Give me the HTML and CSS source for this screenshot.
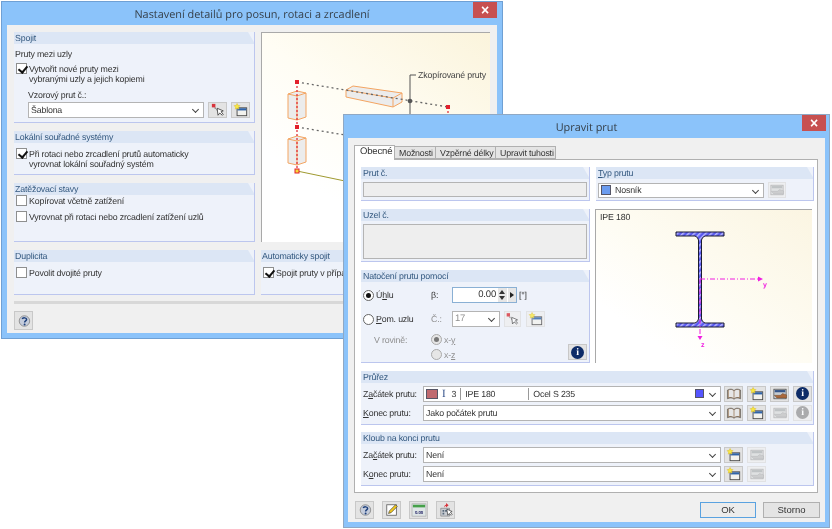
FILE: index.html
```html
<!DOCTYPE html>
<html lang="cs">
<head>
<meta charset="utf-8">
<title>Upravit prut</title>
<link rel="stylesheet" href="styles.css">
</head>
<body>
<svg class="defs" width="0" height="0">
  <defs>
    <pattern id="hatch" width="4" height="4" patternUnits="userSpaceOnUse" patternTransform="rotate(45)"><rect width="4" height="4" fill="#5a5af0"/><rect width="1.500" height="4" fill="#b8b8ff"/></pattern>
  </defs>
  <symbol id="i-new" viewBox="0 0 18 16"><rect x="4.500" y="5.500" width="11" height="9" fill="#f2f2ee" stroke="#444"/><rect x="5" y="6" width="10" height="2.500" fill="#2f63a8"/><path d="M4.500 .5l1 2.200 2.400.3-1.700 1.700.4 2.300-2.100-1.100-2.100 1.100.4-2.300-1.700-1.700 2.400-.3z" fill="#f9e840" stroke="#d8b820" stroke-width=".5"/></symbol>
  <symbol id="i-pick" viewBox="0 0 18 16"><path d="M3 3l9 9" stroke="#888" stroke-width="1.500" stroke-dasharray="2 1"/><rect x="2" y="1" width="4" height="4" fill="#d8343c"/><path d="M8 6l1 8 2-2.500 3 2.500 1-1-2.500-3 2.500-1z" fill="#fff" stroke="#333" stroke-width=".9"/></symbol>
  <symbol id="i-book" viewBox="0 0 18 16"><path d="M1.500 3.500c3-1.500 5.500-1.500 7.500.5 2-2 4.500-2 7.500-.5v10c-3-1.500-5.500-1.500-7.500.5-2-2-4.500-2-7.500-.5z" fill="#a08468" stroke="#555" stroke-width=".7"/><path d="M3 3.800c2.500-.8 4.500-.6 5.500 1v8c-1.200-1.300-3-1.600-5.500-1zM9.500 4.800c1-1.600 3-1.800 5.500-1v8c-2.500-.6-4.300-.3-5.500 1z" fill="#e6e6e6"/></symbol>
  <symbol id="i-imp" viewBox="0 0 18 16"><rect x="2" y="2.500" width="14" height="11" fill="#c6ccd2" stroke="#444" stroke-width=".8"/><rect x="3" y="3.500" width="12" height="2.500" fill="#34568a"/><path d="M2.500 9.500h7l2.500-2 4.500 1.500v3.500h-11z" fill="#a9683c" stroke="#6a4a30" stroke-width=".5"/></symbol>
  <symbol id="i-imp-off" viewBox="0 0 18 16"><rect x="2" y="2.500" width="14" height="11" fill="#dcdedd" stroke="#a4a4a4" stroke-width=".8"/><rect x="3" y="3.500" width="12" height="2.500" fill="#b4b8b8"/><path d="M2.500 9.500h7l2.500-2 4.500 1.500v3.500h-11z" fill="#c4c4c4" stroke="#a8a8a8" stroke-width=".5"/></symbol>
  <symbol id="i-help" viewBox="0 0 18 16"><circle cx="9.500" cy="8" r="6" fill="#c4ccdc" stroke="#8a8a8a"/><path d="M7 5.800c.6-2 5-1.800 5 .5 0 1.600-2.300 1.700-2.300 3.400" fill="none" stroke="#1d3f7a" stroke-width="1.700"/><circle cx="9.700" cy="12" r="1.100" fill="#1d3f7a"/></symbol>
</svg>

<section class="window w1">
  <header class="titlebar">
    <h1 class="title">Nastavení detailů pro posun, rotaci a zrcadlení</h1>
    <button class="close">×</button>
  </header>
  <div class="client client-1">
    <div class="w1-grid">
      <div class="stack">
        <div class="group g-spojit">
          <h2 class="ghead">Spojit</h2>
          <div class="gbody">
            <p class="first-line">Pruty mezi uzly</p>
            <label class="check"><span class="box on"></span><span>Vytvořit nové pruty mezi<br>vybranými uzly a jejich kopiemi</span></label>
            <p class="indent vz">Vzorový prut č.:</p>
            <div class="row indent r-vz">
              <div class="combo wide"><span>Šablona</span><i class="chev"></i></div>
              <span class="ibtn"><svg><use href="#i-pick"/></svg></span>
              <span class="ibtn"><svg><use href="#i-new"/></svg></span>
            </div>
          </div>
        </div>
        <div class="group g-lok">
          <h2 class="ghead">Lokální souřadné systémy</h2>
          <div class="gbody">
            <label class="check"><span class="box on"></span><span>Při rotaci nebo zrcadlení prutů automaticky<br>vyrovnat lokální souřadný systém</span></label>
          </div>
        </div>
        <div class="group g-zat">
          <h2 class="ghead">Zatěžovací stavy</h2>
          <div class="gbody col-16">
            <label class="check"><span class="box"></span><span>Kopírovat včetně zatížení</span></label>
            <label class="check"><span class="box"></span><span>Vyrovnat při rotaci nebo zrcadlení zatížení uzlů</span></label>
          </div>
        </div>
      </div>
      <div class="preview p-copy">
        <svg class="copy-svg" width="229" height="210" viewBox="261 32 229 210">
          <path d="M297 171L345 181" stroke="#a09a30" stroke-width="1"/>
          <path d="M416 75H410V120" stroke="#555" fill="none"/>
          <g fill="#ececec" stroke="#f4a562">
            <path d="M288 94l9 -3 9 2v24l-9 3-9 -2z"/><path d="M288 94l9 2 9-3M297 96v24" fill="none"/>
            <path d="M288 139l9 -3 9 2v24l-9 3-9 -2z"/><path d="M288 139l9 2 9-3M297 141v24" fill="none"/>
            <path d="M346 90l7-4 49 7v9l-9 5-47-10z"/><path d="M346 90l47 8 9-5M393 98v9" fill="none"/>
          </g>
          <path d="M297 82L448 107M297 127L345 135" stroke="#666" stroke-width="1.300" stroke-dasharray="2 3" fill="none"/>
          <path d="M297 82V171M448 107V125" stroke="#e2202c" stroke-width="1.200" stroke-dasharray="2 2" fill="none"/>
          <circle cx="410" cy="101" r="2.300" fill="#555"/>
          <rect x="295" y="80" width="4" height="4" fill="#e2202c"/><rect x="295" y="125" width="4" height="4" fill="#e2202c"/><rect x="446" y="105" width="4" height="4" fill="#e2202c"/>
          <rect x="295" y="169" width="4" height="4" fill="#f7d93a" stroke="#e2202c"/>
          <text x="418" y="78" class="svg-label">Zkopírované pruty</text>
        </svg>
      </div>
      <div class="group">
        <h2 class="ghead">Duplicita</h2>
        <div class="gbody"><label class="check"><span class="box"></span><span>Povolit dvojité pruty</span></label></div>
      </div>
      <div class="group">
        <h2 class="ghead">Automaticky spojit</h2>
        <div class="gbody"><label class="check"><span class="box on"></span><span class="nowrap">Spojit pruty v případ</span></label></div>
      </div>
    </div>
    <hr class="sep">
    <footer class="foot"><span class="ibtn big"><svg><use href="#i-help"/></svg></span></footer>
  </div>
</section>

<section class="window w2">
  <header class="titlebar">
    <h1 class="title">Upravit prut</h1>
    <button class="close">×</button>
  </header>
  <div class="client client-2">
    <nav class="tabs">
      <span class="tab active">Obecné</span><span class="tab">Možnosti</span><span class="tab">Vzpěrné délky</span><span class="tab">Upravit tuhosti</span>
    </nav>
    <div class="page">
      <div class="w2-grid">
        <div class="stack">
          <div class="group g-34">
            <h2 class="ghead">Prut č.</h2>
            <div class="gbody tight"><div class="field f-15"></div></div>
          </div>
          <div class="group g-53">
            <h2 class="ghead">Uzel č.</h2>
            <div class="gbody tight"><div class="field f-35"></div></div>
          </div>
          <div class="group g-93">
            <h2 class="ghead">Natočení prutu pomocí</h2>
            <div class="gbody rot">
              <div class="rot-row r1">
                <span class="radio on"></span><span class="rl">Ú<u>h</u>lu</span>
                <span class="rk">β:</span>
                <div class="spin"><span>0.00</span><i class="updown"></i><i class="step"></i></div>
                <span class="unit">[°]</span>
              </div>
              <div class="rot-row r2">
                <span class="radio"></span><span class="rl"><u>P</u>om. uzlu</span>
                <span class="rk off">Č.:</span>
                <div class="combo num off"><span>17</span><i class="chev"></i></div>
                <span class="ibtn off"><svg><use href="#i-pick"/></svg></span>
                <span class="ibtn off"><svg><use href="#i-new"/></svg></span>
              </div>
              <div class="rot-bottom">
                <div class="plane">
                  <div class="rot-row r3"><span class="pl off">V rovině:</span><span class="radio dis on"></span><span class="off pv">x-<u>y</u></span></div>
                  <div class="rot-row r4"><span class="pl"></span><span class="radio dis"></span><span class="off pv">x-<u>z</u></span></div>
                </div>
                <span class="ibtn info-b"><span class="info">i</span></span>
              </div>
            </div>
          </div>
        </div>
        <div class="stack">
          <div class="group g-34">
            <h2 class="ghead"><u>T</u>yp prutu</h2>
            <div class="gbody tight row r-typ">
              <div class="combo typ"><span class="sw sw-nos"></span><span>Nosník</span><i class="chev"></i></div>
              <span class="ibtn off"><svg><use href="#i-imp-off"/></svg></span>
            </div>
          </div>
          <div class="preview p-ipe">
            <span class="ipe-name">IPE 180</span>
            <svg class="ipe-svg" width="217" height="154" viewBox="596 209 217 154">
              <path d="M677 232h48v4h-19q-3 1-3.500 4v79q.5 3 3.500 4h19v4h-48v-4h19q3-1 3.500-4v-79q-.5-3-3.500-4h-19z" fill="url(#hatch)" stroke="#1c1c30" stroke-width="1"/>
              <path d="M701 279h60M701 279v56" stroke="#f01ee0" stroke-width="1" stroke-dasharray="5 2 1 2" fill="none"/>
              <path d="M759 276.500l5 2.500-5 2.500zM698.500 336h5l-2.500 4z" fill="#f01ee0"/>
              <text x="764" y="287" class="axis">y</text><text x="702" y="347" class="axis">z</text>
            </svg>
          </div>
        </div>
      </div>
      <div class="group full g-54">
        <h2 class="ghead">Průřez</h2>
        <div class="gbody cs">
          <div class="cs-row">
            <span class="cl">Z<u>a</u>čátek prutu:</span>
            <div class="combo cs-c"><span class="sw sw-red"></span><span class="ibeam">I</span><span class="n3">3</span><span class="cell c1">IPE 180</span><span class="cell c2">Ocel S 235</span><span class="sw sw-blue"></span><i class="chev"></i></div>
            <span class="ibtn"><svg><use href="#i-book"/></svg></span>
            <span class="ibtn"><svg><use href="#i-new"/></svg></span>
            <span class="ibtn"><svg><use href="#i-imp"/></svg></span>
            <span class="ibtn"><span class="info">i</span></span>
          </div>
          <div class="cs-row">
            <span class="cl"><u>K</u>onec prutu:</span>
            <div class="combo cs-c"><span>Jako počátek prutu</span><i class="chev"></i></div>
            <span class="ibtn"><svg><use href="#i-book"/></svg></span>
            <span class="ibtn"><svg><use href="#i-new"/></svg></span>
            <span class="ibtn off"><svg><use href="#i-imp-off"/></svg></span>
            <span class="ibtn off"><span class="info grey">i</span></span>
          </div>
        </div>
      </div>
      <div class="group full g-54 last">
        <h2 class="ghead">Kloub na konci prutu</h2>
        <div class="gbody cs">
          <div class="cs-row">
            <span class="cl">Za<u>č</u>átek prutu:</span>
            <div class="combo cs-c"><span>Není</span><i class="chev"></i></div>
            <span class="ibtn"><svg><use href="#i-new"/></svg></span>
            <span class="ibtn off"><svg><use href="#i-imp-off"/></svg></span>
          </div>
          <div class="cs-row">
            <span class="cl">K<u>o</u>nec prutu:</span>
            <div class="combo cs-c"><span>Není</span><i class="chev"></i></div>
            <span class="ibtn"><svg><use href="#i-new"/></svg></span>
            <span class="ibtn off"><svg><use href="#i-imp-off"/></svg></span>
          </div>
        </div>
      </div>
    </div>
    <footer class="foot foot-2">
      <span class="ibtn big"><svg><use href="#i-help"/></svg></span>
      <span class="ibtn big"><svg viewBox="0 0 18 16"><rect x="3" y="2" width="11" height="12" fill="#fff" stroke="#666"/><path d="M5 12l1-3 7-7 2 2-7 7z" fill="#f2c81e" stroke="#333" stroke-width=".7"/></svg></span>
      <span class="ibtn big"><svg viewBox="0 0 18 16"><rect x="1" y="1" width="16" height="14" fill="#dfe6e6" stroke="#999" stroke-width=".6"/><rect x="2" y="2" width="14" height="3" fill="#46a04a"/><text x="9" y="12.500" class="num-ico">0.00</text></svg></span>
      <span class="ibtn big"><svg viewBox="0 0 18 16"><path d="M3 6h10v9H3z" fill="#c8ccd2" stroke="#777" stroke-width=".7"/><path d="M5 8h2v2H5zM8 8h2v2H8zM5 11h2v2H5z" fill="#567"/><path d="M7 5c0-2 1-3 2-3V0l3 2.500L9 5V3.500C8.500 3.500 8 4 7 5z" fill="#d8343c"/><path d="M10 7l1 7 1.500-2 2.500 2 1-1-2-2.500 2-.8z" fill="#fff" stroke="#222" stroke-width=".7"/></svg></span>
      <span class="spacer"></span>
      <button class="btn ok">OK</button>
      <button class="btn">Storno</button>
    </footer>
  </div>
</section>
</body>
</html>
```
FILE: styles.css
```css
* { box-sizing: border-box; }
html, body { margin: 0; padding: 0; }
body { width: 832px; height: 529px; background: #fff; overflow: hidden; position: relative;
  font-family: "Liberation Sans", Arial, sans-serif; font-size: 8.8px; letter-spacing: -.17px; color: #333; line-height: 10px; text-rendering: geometricPrecision; }
.defs { position: absolute; }
p, h1, h2 { margin: 0; font-weight: normal; font-size: inherit; }
u { text-decoration: underline; }

.window { position: absolute; background: #8bc3fa; border: 1px solid #6fa0d4; display: flex; flex-direction: column; filter: blur(.3px); }
.w1 { left: 1px; top: 1px; width: 502px; height: 338px; }
.w2 { left: 343px; top: 114px; width: 487px; height: 414px; border-color: #8fa8c4; }
.titlebar { height: 23px; position: relative; display: flex; align-items: center; justify-content: center; flex: none; }
.title { font-size: 10.900px; letter-spacing: 0; color: #36404a; font-family: "Open Sans", "Liberation Sans", sans-serif; position: relative; top: 1px; }
.close { position: absolute; right: 5px; top: 0; width: 24px; height: 16px; background: #c75050; color: #fff; border: 0; padding: 0; font: bold 14px/15px "Liberation Sans", sans-serif; }
.w2 .close { right: 3px; }
.client { flex: 1; background: #f0f0f0; min-height: 0; }
.client-1 { margin: 0 5px 5px; padding: 7px 6px 0 7px; }
.client-2 { margin: 0 4px 5px; padding: 7px 7px 0 6px; }
.w1-grid { display: grid; grid-template-columns: 241px 229px; grid-template-rows: 210px 45px; column-gap: 6px; row-gap: 8px; }
.stack { display: flex; flex-direction: column; gap: 8px; }

.group { background: #eef2fa; border-right: 1px solid #bcc6ee; border-bottom: 1px solid #bcc6ee; min-width: 0; overflow: hidden; }
.ghead { height: 12px; background: #dce6f5; color: #33587f; line-height: 12px; padding-left: 2px; clip-path: polygon(0 0, calc(100% - 7px) 0, 100% 100%, 0 100%); margin-right: -1px; }
.client-1 .ghead { padding-left: 1px; }
.gbody { padding: 0 2px; }
.client-1 .gbody { padding: 0 1px; }
.g-spojit { height: 91px; }
.g-lok { height: 44px; }
.g-zat { height: 59px; }
.first-line { padding-top: 5px; height: 19px; }
.indent { margin-left: 13px; }
.vz { margin-top: 6px; height: 11px; }
.check { display: flex; gap: 2px; align-items: flex-start; padding-left: 1px; }
.check > span:last-child { padding-top: 1px; }
.g-lok .check { padding-top: 5px; }
.col-16 { padding-top: 6px; display: flex; flex-direction: column; gap: 5px; }
.w1-grid > .group .check { padding-top: 5px; }
.nowrap { white-space: nowrap; }
.box { width: 11px; height: 11px; flex: none; background: #fff; border: 1px solid #8e8f8f; position: relative; }
.box.on::after { content: ""; position: absolute; left: 3px; top: 0; width: 4px; height: 7px; border: solid #111; border-width: 0 2px 2px 0; transform: rotate(40deg); }

.row { display: flex; align-items: center; }
.r-vz { gap: 4px; margin-top: 1px; }
.combo { height: 16px; background: #fff; border: 1px solid #b4b4b4; display: flex; align-items: center; padding-left: 2px; position: relative; }
.chev { position: absolute; right: 5px; top: 4px; width: 5px; height: 5px; border: solid #444; border-width: 0 1.500px 1.500px 0; transform: rotate(45deg); }
.wide { width: 176px; }
.ibtn { width: 19px; height: 16px; flex: none; background: #e3e3e3; border: 1px solid #c8c8c8; display: flex; align-items: center; justify-content: center; }
.ibtn svg { width: 16px; height: 14px; display: block; }
.ibtn.off { opacity: .8; background: #efefef; border-color: #dfdfdf; }
.ibtn.big { height: 19px; width: 19px; }

.preview { background: linear-gradient(215deg, #fbf4dc 0%, #fffdf4 45%, #fff 75%); border: 1px solid #a9a9a9; border-width: 1px 0 0 1px; overflow: hidden; position: relative; }
.p-copy { height: 210px; }
.copy-svg { display: block; margin: -1px 0 0 -1px; }
.svg-label { font-size: 8.800px; letter-spacing: -.17px; fill: #444; font-family: "Liberation Sans", sans-serif; }

.sep { border: 0; height: 3px; background: #d8d8d8; margin: 6px 0 7px; }
.foot { display: flex; }

.tabs { display: flex; height: 14px; align-items: flex-end; position: relative; z-index: 1; }
.tab { height: 13px; flex: none; padding: 0 0 0 4px; background: #e4e4e4; border: 1px solid #b0b0b0; border-left: 0; line-height: 12px; color: #333; white-space: nowrap; }
.tab.active { height: 15px; width: 41px; background: #fff; border: 1px solid #b0b0b0; border-bottom: 0; padding: 0 0 0 5px; line-height: 12px; margin-bottom: -1px; font-size: 9.500px; }
.tab:nth-child(2) { width: 41px; }
.tab:nth-child(3) { width: 60px; }
.tab:nth-child(4) { width: 60px; }
.page { background: #fff; border: 1px solid #b0b0b0; height: 334px; padding: 7px 3px 0 6px; display: flex; flex-direction: column; }
.w2-grid { display: grid; grid-template-columns: 229px 218px; column-gap: 6px; }
.g-34 { height: 34px; }
.g-53 { height: 53px; }
.g-93 { height: 93px; }
.g-54 { height: 54px; }
.full { margin-top: 8px; flex: none; }
.last { margin-top: 7px; }
.tight { padding: 3px 2px 0; }
.field { background: #eeeeee; border: 1px solid #b4b4b4; }
.f-15 { height: 15px; }
.f-35 { height: 35px; }
.r-typ { gap: 4px; }
.typ { width: 166px; height: 15px; gap: 4px; }
.sw { display: inline-block; flex: none; width: 10px; height: 10px; border: 1px solid #556; }
.sw-nos { background: #6b9cf0; }
.sw-red { background: #c06a70; width: 12px; }
.sw-blue { background: #5555ff; width: 9px; height: 9px; margin-left: auto; margin-right: 16px; }
.r-typ .ibtn { width: 18px; }
.p-ipe { height: 154px; width: 217px; margin-left: -1px; background: linear-gradient(215deg, #fbf5e2 0%, #fefcf3 50%, #fff 80%); }
.ipe-svg { position: absolute; left: -1px; top: -1px; }
.ipe-name { position: absolute; left: 4px; top: 2px; z-index: 1; }
.axis { font-size: 7px; fill: #f01ee0; font-family: "Liberation Sans", sans-serif; font-weight: bold; }

.rot { padding: 0; position: relative; }
.rot-row { display: flex; align-items: center; }
.r1 { padding: 5px 0 0 2px; height: 21px; }
.r2 { margin-top: 8px; padding-left: 2px; height: 16px; }
.rl { width: 57px; padding-left: 2px; }
.rk { width: 21px; }
.radio { width: 11px; height: 11px; flex: none; border-radius: 50%; background: #fff; border: 1px solid #666; position: relative; }
.radio.on::after { content: ""; position: absolute; left: 2px; top: 2px; width: 5px; height: 5px; border-radius: 50%; background: #111; }
.radio.dis { background: #e6e6e6; border-color: #aaa; }
.radio.dis.on::after { background: #777; }
.off { color: #8f8f8f; }
.spin { width: 65px; height: 16px; background: #fff; border: 1px solid #8ab0d4; display: flex; align-items: center; justify-content: flex-end; font-size: 9.500px; }
.updown { width: 9px; height: 14px; background: #e6e6e6; margin-left: 2px; position: relative; }
.updown::before { content: ""; position: absolute; left: 1px; top: 2px; border: 3.500px solid transparent; border-top: 0; border-bottom: 4px solid #333; }
.updown::after { content: ""; position: absolute; left: 1px; bottom: 2px; border: 3.500px solid transparent; border-bottom: 0; border-top: 4px solid #333; }
.step { width: 8px; height: 14px; background: #e6e6e6; margin-left: 1px; position: relative; }
.step::after { content: ""; position: absolute; left: 2px; top: 4px; border: 3px solid transparent; border-right: 0; border-left: 4px solid #222; }
.unit { margin-left: 2px; }
.num { width: 48px; margin-right: 4px; font-size: 9.500px; }
.num + .ibtn { width: 17px; margin-right: 5px; }
.rot-bottom { display: flex; align-items: flex-end; padding-left: 13px; margin-top: 5px; }
.plane { flex: none; width: 194px; }
.pl { width: 57px; }
.r3 { height: 15px; }
.r4 { height: 15px; }
.pv { margin-left: 2px; }
.info-b { margin-bottom: 2px; }
.info { width: 13px; height: 13px; border-radius: 50%; background: #0e2c68; color: #fff; font: bold 10px/13px "Liberation Serif", serif; text-align: center; display: block; }
.info.grey { background: #9a9a9a; }

.cs { padding: 3px 0 0 2px; display: flex; flex-direction: column; gap: 4px; }
.cs-row { display: flex; align-items: center; gap: 4px; height: 15px; }
.cl { width: 56px; flex: none; white-space: nowrap; }
.cs-c { width: 298px; margin-right: -1px; height: 16px; }
.cs-row .ibtn { height: 16px; }
.ibeam { color: #33508a; font-family: "Liberation Serif", serif; font-size: 11px; margin-left: 4px; }
.n3 { margin-left: 6px; }
.cell { border-left: 1px solid #999; padding-left: 4px; height: 12px; line-height: 12px; }
.c1 { margin-left: 4px; width: 68px; flex: none; }
.c2 { width: 100px; flex: none; }

.foot-2 { padding: 8px 0 0 1px; margin-right: -2px; gap: 8px; align-items: center; }
.foot-2 .ibtn.big { height: 18px; }
.spacer { flex: 1; }
.btn { width: 57px; height: 16px; background: #e4e4e4; border: 1px solid #b0b0b0; font: 9.500px/14px "Liberation Sans", sans-serif; color: #333; padding: 0; }
.ok { width: 56px; border-color: #5aa2e0; background: #ececec; }
.ok + .btn { margin-left: -1px; }
.num-ico { font-size: 5px; fill: #226; text-anchor: middle; font-family: "Liberation Sans", sans-serif; font-weight: bold; }
```
